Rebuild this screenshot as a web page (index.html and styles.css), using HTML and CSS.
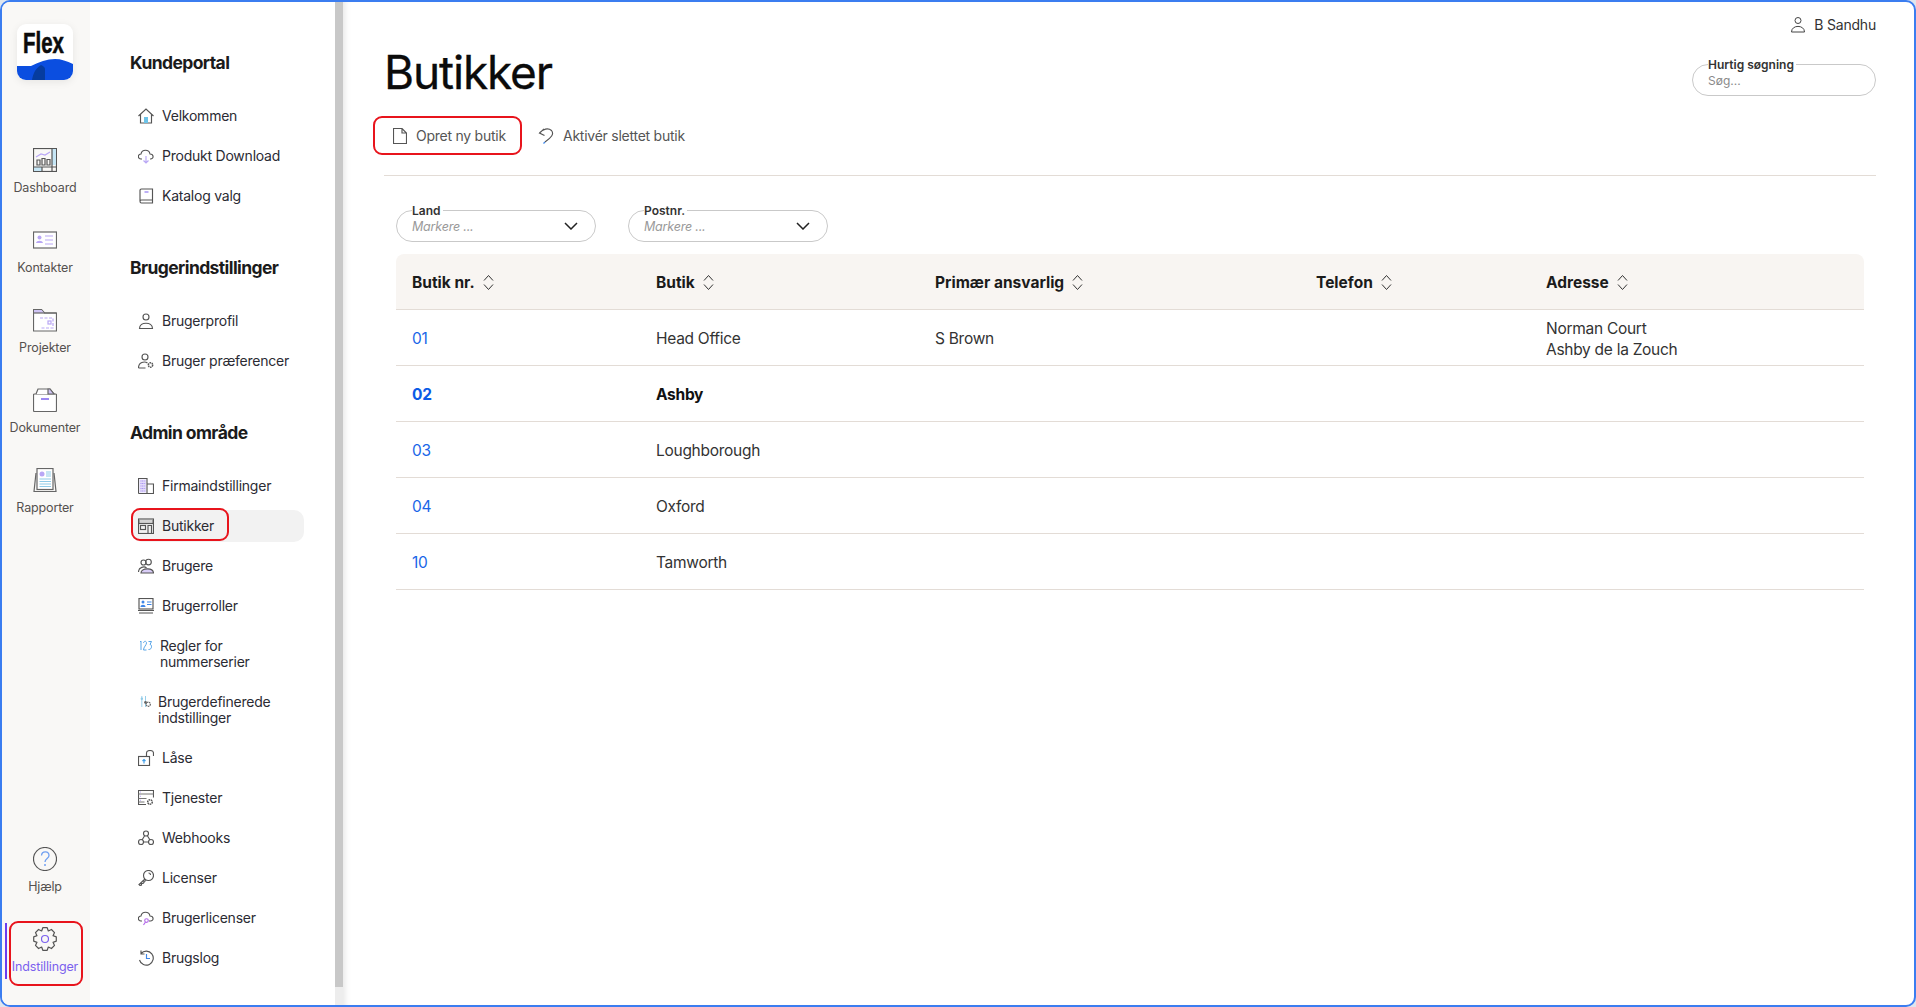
FILE: index.html
```html
<!DOCTYPE html>
<html lang="da">
<head>
<meta charset="utf-8">
<title>Butikker</title>
<link rel="stylesheet" href="styles.css">
</head>
<body>
<div class="window">
  <aside class="rail">
    <div class="logo">
      <svg class="logo-art" viewBox="0 0 56 56"><path d="M0 42H14C22 38 30 35 38 35 44 35 50 37 56 40V56H0z" fill="#0b4ee0"/><path d="M15 56c1-7 4-12 9-15 2 1 4 2 4 4v11z" fill="#063c9f"/></svg>
      <span class="logo-text">Flex</span>
    </div>
    <a class="rail-item first">
      <svg class="rail-icon" viewBox="0 0 24 24" fill="none" stroke="#555"><rect x=".5" y=".5" width="23" height="23"/><rect x="19" y="1" width="4" height="16" fill="#c6e6f5" stroke="none"/><rect x="1" y="19" width="8" height="4" fill="#c6e6f5" stroke="none"/><path d="M19 .5v23M.5 19h22.500M9 19v4.500"/><path d="M3 9l5-3 4 1 5-3" stroke="#b9a7f5"/><path d="M4 12h3v5H4zM9 10.500h3V17H9zM14 11.500h3V17h-3z"/></svg>
      <span>Dashboard</span>
    </a>
    <a class="rail-item">
      <svg class="rail-icon" viewBox="0 0 24 24" fill="none" stroke="#666"><rect x=".5" y="4" width="23" height="16" fill="#fff"/><circle cx="6.500" cy="9.500" r="2" fill="#b9a7f5" stroke="none"/><path d="M3 15c.5-3 6.500-3 7 0z" fill="#b9a7f5" stroke="none"/><path d="M12 8h8M12 12h8M12 16h8" stroke="#b9a7f5"/></svg>
      <span>Kontakter</span>
    </a>
    <a class="rail-item">
      <svg class="rail-icon" viewBox="0 0 24 24" fill="none" stroke="#666"><path d="M.5 5V1.500h8l3 3.500h12v18H.5z" fill="#fff"/><path d="M1 2h7.500l2.500 3H1z" fill="#cfc4f5" stroke="none"/><path d="M.5 5h23"/><path d="M7 10h13v10H7" stroke="#b9a7f5" stroke-dasharray="3 1.500"/><rect x="15" y="13" width="3" height="3" stroke="#b9a7f5"/></svg>
      <span>Projekter</span>
    </a>
    <a class="rail-item">
      <svg class="rail-icon" viewBox="0 0 24 24" fill="none" stroke="#666"><rect x=".5" y="6" width="23" height="17.500" rx="1" fill="#fff"/><path d="M3 6l2-5h12l4 5" fill="#fff"/><path d="M15 1l2 0 4 5h-6z" fill="#cfc4f5"/><path d="M8 11h8" stroke="#7b61ee" stroke-width="1.500"/></svg>
      <span>Dokumenter</span>
    </a>
    <a class="rail-item">
      <svg class="rail-icon" viewBox="0 0 24 24" fill="none" stroke="#666"><path d="M3 5L1 23.500h22L21 5"/><rect x="4" y=".5" width="16" height="21" fill="#fff"/><circle cx="9" cy="6" r="2.500" fill="#b9a7f5" stroke="none"/><path d="M13 4h5M13 6h5M13 8h5M6.500 11h11.500M6.500 13.500h11.500M6.500 16h11.500M6.500 18.500h11.500" stroke="#8fcbe8"/></svg>
      <span>Rapporter</span>
    </a>
    <a class="rail-item help">
      <svg class="rail-icon" viewBox="0 0 24 24" fill="none" stroke="#555"><circle cx="12" cy="12" r="11.500"/><path d="M8.500 8.500c.5-5 7.500-4.500 7.500 0 0 3-4 3-4 6.500" stroke="#6f9ff0" stroke-width="1.300"/><circle cx="12" cy="18" r="1" fill="#6f9ff0" stroke="none"/></svg>
      <span>Hjælp</span>
    </a>
    <a class="rail-item active">
      <svg class="rail-icon" viewBox="0 0 24 24" fill="none" stroke="#555" stroke-linejoin="round"><path d="M9.800.7H14.200L15.330 3.960 18.430 2.470 21.530 5.570 20.040 8.670 23.290 9.810V14.190L20.040 15.330 21.530 18.430 18.430 21.530 15.330 20.040 14.200 23.300H9.800L8.670 20.040 5.570 21.530 2.470 18.430 3.960 15.330.71 14.190V9.810L3.960 8.670 2.470 5.570 5.570 2.470 8.670 3.960z"/><circle cx="12" cy="12" r="3.500" stroke="#7b61ee"/></svg>
      <span>Indstillinger</span>
    </a>
  </aside>

  <nav class="panel">
    <h2 class="panel-title">Kundeportal</h2>
    <a class="nav-item"><svg class="nav-icon" viewBox="0 0 16 16" fill="none" stroke="#555"><path d="M.5 8L8 1l7.500 7M2.500 6.500V15h11V6.500"/><rect x="6" y="9" width="4" height="6" fill="#6cc3e8" stroke="none"/></svg>Velkommen</a>
    <a class="nav-item"><svg class="nav-icon" viewBox="0 0 16 16" fill="none" stroke="#555"><path d="M4 11H3C-.5 11-.5 6 3 6c1-5 8-5 9 0 4 0 4 5 .5 5H12"/><path d="M8 8v7M5.500 12.500L8 15l2.500-2.500" stroke="#b9a7f5"/></svg>Produkt Download</a>
    <a class="nav-item"><svg class="nav-icon" viewBox="0 0 16 16" fill="none" stroke="#555"><path d="M2 13V2.500C2 1.500 2.500 1 3.500 1H14.500v11H3.500C1.500 12 1.500 15 3.500 15h11v-3"/><path d="M6.500 4h4" stroke="#7b61ee"/></svg>Katalog valg</a>

    <h2 class="panel-title spaced">Brugerindstillinger</h2>
    <a class="nav-item"><svg class="nav-icon" viewBox="0 0 16 16" fill="none" stroke="#555"><circle cx="8" cy="4" r="3"/><path d="M1.500 15.500c0-7 13-7 13 0z"/></svg>Brugerprofil</a>
    <a class="nav-item"><svg class="nav-icon" viewBox="0 0 16 16" fill="none" stroke="#555"><circle cx="7" cy="4" r="3"/><path d="M.5 15c0-6 6-7 9-5M.5 15h7"/><circle cx="12.500" cy="12" r="2.200" stroke-width="1.500" stroke-dasharray="1.500 .6"/></svg>Bruger præferencer</a>

    <h2 class="panel-title spaced">Admin område</h2>
    <a class="nav-item"><svg class="nav-icon" viewBox="0 0 16 16" fill="none" stroke="#555"><path d="M.5 15.500V.5h8.500v15M9 6h6.500v9.500H.5"/><path d="M1.500 1.500h6.500v13H1.500z" fill="#e3dbfa" stroke="none"/><path d="M2.500 3h5M2.500 5.500h5M2.500 8h5M2.500 10.500h5M2.500 13h5" stroke="#a693f0" stroke-width="1.200" stroke-dasharray="1 .6"/></svg>Firmaindstillinger</a>
    <a class="nav-item current">
      <svg class="nav-icon" viewBox="0 0 16 16" fill="none" stroke="#555"><rect x=".5" y="1" width="15" height="14.500"/><path d="M1 2h14v3H1z" fill="#999" stroke="none"/><path d="M3 2v3M5 2v3M7 2v3M9 2v3M11 2v3M13 2v3" stroke="#fff"/><path d="M.5 5.500h15"/><rect x="2.500" y="7.500" width="5" height="4"/><path d="M10 15.500V7.500h3.500v8"/></svg>Butikker
    </a>
    <a class="nav-item"><svg class="nav-icon" viewBox="0 0 16 16" fill="none" stroke="#555"><circle cx="5.500" cy="4.500" r="2.500"/><circle cx="10.500" cy="4" r="2.800"/><path d="M.5 14c0-5 6-6 8-4" /><path d="M3 15c0-5 12-6 12.500 0z" fill="#d9cdf7"/></svg>Brugere</a>
    <a class="nav-item"><svg class="nav-icon" viewBox="0 0 16 16" fill="none" stroke="#555"><rect x="1" y=".5" width="14" height="10.500"/><circle cx="5" cy="4" r="1.500" fill="#3d86e8" stroke="none"/><path d="M2.500 9c0-3 5-3 5 0z" fill="#3d86e8" stroke="none"/><path d="M9 4h4.500M9 6.500h4.500" stroke="#3d86e8"/><path d="M0 12.500h16M1 15h14"/></svg>Brugerroller</a>
    <a class="nav-item double tight"><svg class="nav-icon-small" viewBox="0 0 13 11" fill="none" stroke="#5aa6e8"><path d="M1 2l1-1v9M4.500 3C5 .5 7.500 1 7.500 3S4.500 7 4.500 10h3M9.500 1.500h3L11 4.500c2.500 0 2 5.500-1.500 5"/></svg><span>Regler for<br>nummerserier</span></a>
    <a class="nav-item double tighter"><svg class="nav-icon-small" viewBox="0 0 12 12" fill="none" stroke="#666"><path d="M2 0v12M6 0v12" stroke="#8fcbe8"/><circle cx="2" cy="3" r="1.300" fill="#8fcbe8" stroke="none"/><circle cx="6" cy="7" r="1.500" fill="#666" stroke="none"/><circle cx="9" cy="9" r="2.300" stroke-dasharray="1.500 .6" stroke-width="1.300"/></svg><span>Brugerdefinerede<br>indstillinger</span></a>
    <a class="nav-item"><svg class="nav-icon" viewBox="0 0 16 16" fill="none" stroke="#555"><rect x=".5" y="6.500" width="11" height="9"/><path d="M8.500 6.500V3.500c0-4 7-4 7 0V6"/><path d="M6 13.500v-4M4.500 11L6 9.500 7.500 11" stroke="#3d9de8"/></svg>Låse</a>
    <a class="nav-item"><svg class="nav-icon" viewBox="0 0 16 16" fill="none" stroke="#555"><path d="M8 14.500H.5V.5h15v7"/><path d="M.5 4h15M.5 8.500h8M.5 12h6" stroke="#777"/><path d="M2 2h1M2 6.200h1M2 10.200h1" stroke="#b9a7f5"/><circle cx="12" cy="12" r="2.300" stroke-width="1.500" stroke-dasharray="1.500 .6"/></svg>Tjenester</a>
    <a class="nav-item"><svg class="nav-icon" viewBox="0 0 16 16" fill="none" stroke="#555"><circle cx="8" cy="3.500" r="2.500"/><circle cx="3" cy="12" r="2.500"/><circle cx="13" cy="12" r="2.500"/><path d="M6.500 6l-2.500 4M9.500 6l2.500 4M5.500 12h5"/></svg>Webhooks</a>
    <a class="nav-item"><svg class="nav-icon" viewBox="0 0 16 16" fill="none" stroke="#555"><circle cx="10.500" cy="5.500" r="5"/><path d="M7 9L1 14.500 2 15.500 3.500 15v-1.500H5l1-1v-1l2-1"/><path d="M10.500 3a2 2 0 012 2"/></svg>Licenser</a>
    <a class="nav-item"><svg class="nav-icon" viewBox="0 0 16 16" fill="none" stroke="#555"><path d="M4 11H3C-.5 11-.5 6 3 6c1-5 8-5 9 0 4 0 4 5 .5 5H11"/><circle cx="8.500" cy="10.500" r="1.800" stroke="#b46ae8"/><path d="M7.500 12l-2 3" stroke="#b46ae8"/></svg>Brugerlicenser</a>
    <a class="nav-item"><svg class="nav-icon" viewBox="0 0 16 16" fill="none" stroke="#555"><path d="M3 3.500A7 7 0 111.500 10M3 .5v3.500h3.500"/><path d="M8.500 4v4.500H12" stroke="#3d86e8"/></svg>Brugslog</a>
  </nav>

  <div class="scrollbar"></div>

  <main class="main">
    <div class="user">
      <svg class="user-icon" viewBox="0 0 16 16" fill="none" stroke="#444"><circle cx="8" cy="4" r="3"/><path d="M1.500 15.500c0-7.500 13-7.500 13 0z"/></svg>
      <span>B Sandhu</span>
    </div>
    <header class="head">
      <h1 class="title">Butikker</h1>
      <div class="field search">
        <label class="field-label">Hurtig søgning</label>
        <span class="search-value">Søg...</span>
      </div>
    </header>
    <div class="toolbar">
      <a class="tool primary">
        <svg class="tool-icon" viewBox="0 0 14 16" fill="none" stroke="#555"><path d="M.5.500h8.500l4.500 4.500v10.500H.5zM9 .5V5h4.500"/></svg>Opret ny butik
      </a>
      <a class="tool">
        <svg class="tool-icon wide" viewBox="0 0 16 16" fill="none" stroke="#555"><path d="M6 .8L1.500 5 6.500 7.500M1.500 5C5 1 10-.5 13.500 2.500 16.500 6 13 10 7 14"/><path d="M7 14l-1.500 1.500" stroke="#3d86e8"/></svg>Aktivér slettet butik
      </a>
    </div>
    <div class="filters">
      <div class="field select">
        <label class="field-label">Land</label>
        <span class="select-value">Markere ...</span>
        <svg class="chevron" viewBox="0 0 14 8" fill="none" stroke="#222" stroke-width="1.500"><path d="M1 1l6 6 6-6"/></svg>
      </div>
      <div class="field select">
        <label class="field-label">Postnr.</label>
        <span class="select-value">Markere ...</span>
        <svg class="chevron" viewBox="0 0 14 8" fill="none" stroke="#222" stroke-width="1.500"><path d="M1 1l6 6 6-6"/></svg>
      </div>
    </div>
    <table class="grid">
      <colgroup><col class="c1"><col class="c2"><col class="c3"><col class="c4"><col></colgroup>
      <thead>
        <tr>
          <th><span class="th">Butik nr.<svg class="sort" viewBox="0 0 11 17" fill="none" stroke="#333"><path d="M1 6.500L5.500 1.500 10 6.500M1 10.500l4.500 5 4.500-5"/></svg></span></th>
          <th><span class="th">Butik<svg class="sort" viewBox="0 0 11 17" fill="none" stroke="#333"><path d="M1 6.500L5.500 1.500 10 6.500M1 10.500l4.500 5 4.500-5"/></svg></span></th>
          <th><span class="th">Primær ansvarlig<svg class="sort" viewBox="0 0 11 17" fill="none" stroke="#333"><path d="M1 6.500L5.500 1.500 10 6.500M1 10.500l4.500 5 4.500-5"/></svg></span></th>
          <th><span class="th">Telefon<svg class="sort" viewBox="0 0 11 17" fill="none" stroke="#333"><path d="M1 6.500L5.500 1.500 10 6.500M1 10.500l4.500 5 4.500-5"/></svg></span></th>
          <th><span class="th">Adresse<svg class="sort" viewBox="0 0 11 17" fill="none" stroke="#333"><path d="M1 6.500L5.500 1.500 10 6.500M1 10.500l4.500 5 4.500-5"/></svg></span></th>
        </tr>
      </thead>
      <tbody>
        <tr><td><a class="link">01</a></td><td>Head Office</td><td>S Brown</td><td></td><td>Norman Court<br>Ashby de la Zouch</td></tr>
        <tr class="selected"><td><a class="link">02</a></td><td>Ashby</td><td></td><td></td><td></td></tr>
        <tr><td><a class="link">03</a></td><td>Loughborough</td><td></td><td></td><td></td></tr>
        <tr><td><a class="link">04</a></td><td>Oxford</td><td></td><td></td><td></td></tr>
        <tr><td><a class="link">10</a></td><td>Tamworth</td><td></td><td></td><td></td></tr>
      </tbody>
    </table>
  </main>
</div>
</body>
</html>
```

FILE: styles.css
```css
*, *::before, *::after { box-sizing: border-box; }
html, body { margin: 0; height: 100%; background: #dfe6ee; }
body { font-family: Inter, "Liberation Sans", sans-serif; color: #222; overflow: hidden; }
a { color: inherit; text-decoration: none; }

.window {
  display: flex;
  width: 1916px;
  height: 1007px;
  border: 2px solid #3b7df0;
  border-radius: 10px;
  background: #fff;
  overflow: hidden;
}

/* rail */
.rail {
  flex: none;
  width: 88px;
  display: flex;
  flex-direction: column;
  align-items: center;
  padding: 22px 2px 6px 0;
  background: #f9f8f6;
}
.logo {
  position: relative;
  flex: none;
  width: 56px;
  height: 56px;
  margin-bottom: 60px;
  border-radius: 9px;
  background: #fff;
  overflow: hidden;
  box-shadow: 0 2px 8px rgba(0, 0, 0, .08);
}
.logo-art { display: block; width: 56px; height: 56px; }
.logo-text {
  position: absolute;
  left: 6px;
  top: 2px;
  font: 700 30px/34px "Liberation Sans", sans-serif;
  color: #0c0c0c;
  -webkit-text-stroke: .6px #0c0c0c;
  transform: scaleX(.68);
  transform-origin: left center;
}
.rail-item {
  position: relative;
  flex: none;
  width: 74px;
  height: 80px;
  display: flex;
  flex-direction: column;
  align-items: center;
  padding-top: 8px;
  font-size: 12.500px;
  line-height: 16px;
  letter-spacing: -.15px;
  color: #55514f;
}
.rail-icon { display: block; width: 24px; height: 24px; margin-bottom: 8px; stroke-width: 1.200; }
.rail-item.help { margin-top: auto; }
.rail-item.active { color: #7b61ee; }
.rail-item.active::before {
  content: "";
  position: absolute;
  left: -3px;
  top: 4px;
  width: 2px;
  height: 56px;
  background: #6a3df0;
}
.rail-item.active::after {
  content: "";
  position: absolute;
  left: 1px;
  right: -1px;
  top: 2px;
  height: 65px;
  border: 2px solid #e8141c;
  border-radius: 9px;
}
.rail-item.active span { position: relative; }

/* panel */
.panel {
  flex: none;
  width: 245px;
  padding: 49px 31px 0 40px;
  background: #fff;
}
.panel-title {
  margin: 0 0 21px;
  font-size: 17.500px;
  line-height: 24px;
  font-weight: 700;
  color: #1b1b1b;
  letter-spacing: -.6px;
}
.panel-title.spaced { margin-top: 40px; }
.nav-item {
  display: flex;
  align-items: center;
  gap: 8px;
  height: 40px;
  padding-left: 8px;
  font-size: 14px;
  line-height: 16px;
  letter-spacing: -.23px;
  color: #2b2b33;
}
.nav-icon { flex: none; width: 16px; height: 16px; stroke-width: 1.150; }
.nav-icon-small { flex: none; width: 13px; height: 11px; margin-top: 2px; }
.nav-item.double { height: 56px; align-items: flex-start; padding-top: 12px; }
.nav-item.tight { padding-left: 9px; }
.nav-item.tighter { padding-left: 9px; gap: 6px; }
.nav-item.current {
  position: relative;
  height: 32px;
  margin: 4px 0;
  border-radius: 10px;
  background: #f2f2f2;
  margin-left: 2px;
  padding-left: 6px;
}
.nav-item.current::after {
  content: "";
  position: absolute;
  left: -1px;
  top: -2px;
  width: 98px;
  height: 33px;
  border: 2px solid #e8141c;
  border-radius: 9px;
}

/* scrollbar */
.scrollbar {
  flex: none;
  width: 8px;
  background: linear-gradient(#c8c8c8 0 985px, #ededed 985px);
}

/* main */
.main {
  flex: 1;
  min-width: 0;
  padding: 8px 38px 0 41px;
  box-shadow: inset 7px 0 6px -5px rgba(0, 0, 0, .1);
}
.user {
  display: flex;
  justify-content: flex-end;
  align-items: center;
  gap: 8px;
  height: 28px;
  font-size: 14px;
  color: #333;
  letter-spacing: -.2px;
}
.user-icon { width: 16px; height: 17px; }
.head {
  display: flex;
  justify-content: space-between;
  align-items: flex-start;
  margin-top: 4px;
}
.title {
  margin: 0;
  font-size: 46px;
  line-height: 60px;
  font-weight: 400;
  letter-spacing: -1.150px;
  color: #0b0b0b;
  -webkit-text-stroke: .3px #0b0b0b;
}
.field {
  position: relative;
  height: 32px;
  border: 1px solid #c9c9c9;
  border-radius: 16px;
  background: #fff;
}
.field-label {
  position: absolute;
  left: 15px;
  top: -7px;
  padding: 0 2px 0 0;
  font-size: 12px;
  line-height: 14px;
  font-weight: 600;
  color: #333;
  background: #fff;
}
.search { flex: none; width: 184px; margin-top: 22px; }
.search-value {
  position: absolute;
  left: 15px;
  top: 9px;
  font-size: 12px;
  line-height: 14px;
  color: #8a8a8a;
}
.toolbar {
  display: flex;
  align-items: center;
  gap: 8px;
  margin: 14px 0 0 -11px;
  padding-bottom: 21px;
  position: relative;
}
.toolbar::after {
  content: "";
  position: absolute;
  left: 11px;
  right: 0;
  bottom: 0;
  height: 1px;
  background: #e3dcd6;
}
.tool {
  display: flex;
  align-items: center;
  gap: 9px;
  height: 39px;
  padding: 0 8px;
  font-size: 14px;
  letter-spacing: -.25px;
  color: #555;
}
.tool-icon { width: 14px; height: 16px; stroke-width: 1.150; }
.tool-icon.wide { width: 16px; }
.tool.primary {
  width: 149px;
  padding-left: 18px;
  border: 2px solid #e8141c;
  border-radius: 9px;
}
.filters {
  display: flex;
  gap: 32px;
  margin: 34px 0 0 12px;
}
.select { width: 200px; }
.select-value {
  position: absolute;
  left: 15px;
  top: 9px;
  font-size: 12.500px;
  line-height: 14px;
  font-style: italic;
  letter-spacing: -.2px;
  color: #9a9a9a;
}
.chevron {
  position: absolute;
  right: 17px;
  top: 11px;
  width: 14px;
  height: 8px;
}
.grid {
  width: 1468px;
  margin: 12px 0 0 12px;
  border-collapse: separate;
  border-spacing: 0;
  table-layout: fixed;
  font-size: 15.500px;
  letter-spacing: -.28px;
}
.c1 { width: 244px; }
.c2 { width: 279px; }
.c3 { width: 381px; }
.c4 { width: 230px; }
.grid th {
  height: 56px;
  padding: 1px 16px 0;
  text-align: left;
  font-weight: 700;
  letter-spacing: 0;
  color: #1b1b1b;
  background: #f8f5f2;
  border-bottom: 1px solid #e3dcd6;
}
.grid th:first-child { border-top-left-radius: 8px; }
.grid th:last-child { border-top-right-radius: 8px; }
.th { display: inline-flex; align-items: center; gap: 8px; }
.sort { width: 11px; height: 17px; }
.grid td {
  height: 56px;
  padding: 2px 16px 0;
  line-height: 21px;
  color: #333;
  border-bottom: 1px solid #e3dcd6;
}
.link { color: #1a66e8; }
.selected td { font-weight: 700; color: #111; }
.selected .link { color: #0b5be6; }
```
